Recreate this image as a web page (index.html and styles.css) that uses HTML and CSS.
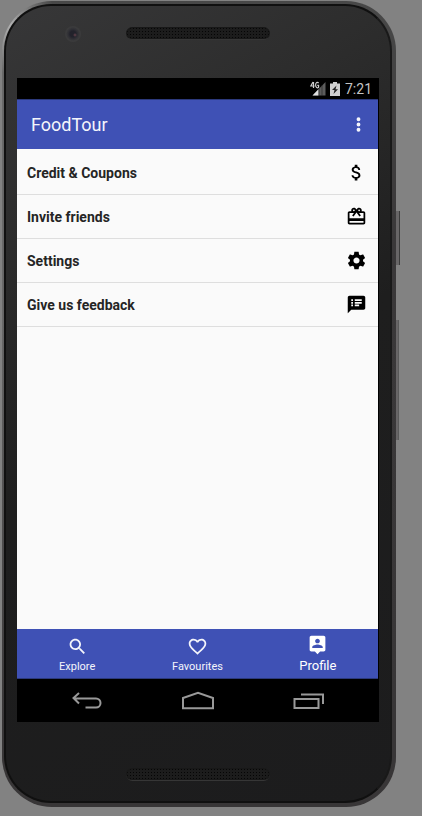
FILE: index.html
```html
<!DOCTYPE html>
<html lang="en">
<head>
<meta charset="utf-8">
<meta name="viewport" content="width=device-width, initial-scale=1">
<title>FoodTour</title>
<link rel="stylesheet" href="styles.css">
</head>
<body>
<div class="phone">
  <span class="side-button power"></span>
  <span class="side-button volume"></span>
  <div class="body">
    <div class="bezel bezel-top">
      <span class="camera"></span>
      <span class="grille"></span>
    </div>
    <div class="screen">
      <div class="status">
        <svg class="status-signal" viewBox="0 0 16 16" role="img" aria-label="4G signal">
          <path d="M3 1 0.8 5H4.6M3.5 1v6" fill="none" stroke="#d0d0d0" stroke-width="1.2"/>
          <path d="M8.6 2.2C7.500 .6 5.600 1.400 5.600 4s1.900 3.400 3 2.300V4.300H7.300" fill="none" stroke="#d0d0d0" stroke-width="1.2"/>
          <path d="M2.500 14.500 15.500 1v13.500z" fill="#5c5c5c"/>
          <path d="M2.500 14.500 8.500 8.300v6.200z" fill="#e0e0e0"/>
          <path d="M9 8v7M12 4v11" stroke="#222" stroke-width=".6"/>
        </svg>
        <svg class="status-battery" viewBox="0 0 10 16" role="img" aria-label="Battery charging">
          <path d="M3 1h4v1.500h3V15H0V2.500h3z" fill="#d0d0d0"/>
          <path d="M6.500 4.500 2 9h2.500L3.500 13 8 8.200H5.500z" fill="#222"/>
        </svg>
        <span class="clock">7:21</span>
      </div>
      <div class="app">
        <header class="appbar">
          <h1>FoodTour</h1>
          <button class="more" aria-label="More options">
            <svg class="icon" viewBox="0 0 24 24"><path d="M12 8.200a2.200 2.200 0 1 0 0-4.400 2.200 2.200 0 0 0 0 4.400zm0 1.600a2.200 2.200 0 1 0 0 4.400 2.200 2.200 0 0 0 0-4.400zm0 6a2.200 2.200 0 1 0 0 4.400 2.200 2.200 0 0 0 0-4.400z"/></svg>
          </button>
        </header>
        <main class="list">
          <button class="row"><span>Credit &amp; Coupons</span>
            <svg class="icon" viewBox="0 0 24 24"><path d="M11.800 10.900c-2.270-.59-3-1.200-3-2.150 0-1.090 1.010-1.850 2.700-1.850 1.780 0 2.440.85 2.500 2.100h2.210c-.07-1.720-1.120-3.300-3.210-3.810V3h-3v2.160c-1.940.42-3.500 1.680-3.500 3.610 0 2.310 1.910 3.460 4.700 4.130 2.500.6 3 1.480 3 2.410 0 .69-.49 1.790-2.700 1.790-2.060 0-2.870-.92-2.980-2.100h-2.200c.12 2.190 1.760 3.420 3.680 3.830V21h3v-2.150c1.950-.37 3.500-1.500 3.500-3.550 0-2.840-2.430-3.810-4.700-4.400z"/></svg></button>
          <button class="row"><span>Invite friends</span>
            <svg class="icon" viewBox="0 0 24 24"><path d="M20 6h-2.180c.11-.31.18-.65.18-1 0-1.660-1.340-3-3-3-1.050 0-1.960.54-2.500 1.350l-.5.670-.5-.68C10.960 2.540 10.050 2 9 2 7.340 2 6 3.340 6 5c0 .35.070.69.180 1H4c-1.110 0-1.990.89-1.990 2L2 19c0 1.110.89 2 2 2h16c1.110 0 2-.89 2-2V8c0-1.110-.89-2-2-2zm-5-2c.55 0 1 .45 1 1s-.45 1-1 1-1-.45-1-1 .45-1 1-1zM9 4c.55 0 1 .45 1 1s-.45 1-1 1-1-.45-1-1 .45-1 1-1zm11 15H4v-2h16v2zm0-5H4V8h5.080L7 10.830 8.620 12 11 8.760l1-1.360 1 1.360L15.380 12 17 10.830 14.920 8H20v6z"/></svg></button>
          <button class="row"><span>Settings</span>
            <svg class="icon" viewBox="0 0 24 24"><path d="M19.430 12.980c.04-.32.070-.64.070-.98s-.03-.66-.07-.98l2.110-1.650c.19-.15.240-.42.120-.64l-2-3.460c-.12-.22-.39-.3-.61-.22l-2.490 1c-.52-.4-1.080-.73-1.690-.98l-.38-2.650C14.460 2.180 14.250 2 14 2h-4c-.25 0-.46.180-.49.420l-.38 2.650c-.61.250-1.170.59-1.690.98l-2.490-1c-.23-.09-.49 0-.61.220l-2 3.460c-.13.220-.07.490.120.640l2.110 1.650c-.04.320-.07.650-.07.980s.03.660.070.980l-2.110 1.650c-.19.150-.24.420-.12.640l2 3.460c.12.220.39.300.61.220l2.490-1c.52.400 1.080.73 1.690.98l.38 2.650c.03.240.24.420.49.420h4c.25 0 .46-.18.49-.42l.38-2.650c.61-.25 1.170-.59 1.690-.98l2.490 1c.23.090.49 0 .61-.22l2-3.460c.12-.22.070-.49-.12-.64l-2.110-1.650zM12 15.500c-1.930 0-3.500-1.570-3.500-3.500s1.570-3.500 3.500-3.500 3.500 1.570 3.500 3.500-1.570 3.500-3.500 3.500z"/></svg></button>
          <button class="row"><span>Give us feedback</span>
            <svg class="icon" viewBox="0 0 24 24"><path d="M20 2H4c-1.100 0-1.990.9-1.990 2L2 22l4-4h14c1.100 0 2-.9 2-2V4c0-1.100-.9-2-2-2zM8 14H6v-2h2v2zm0-3H6V9h2v2zm0-3H6V6h2v2zm7 6h-5v-2h5v2zm3-3h-8V9h8v2zm0-3h-8V6h8v2z"/></svg></button>
        </main>
        <nav class="tabs">
          <a class="tab" href="#explore">
            <svg class="icon" viewBox="0 0 24 24"><path d="M15.500 14h-.79l-.28-.27C15.410 12.590 16 11.110 16 9.500 16 5.910 13.090 3 9.500 3S3 5.910 3 9.500 5.910 16 9.500 16c1.610 0 3.090-.59 4.230-1.570l.27.280v.79l5 4.990L20.490 19l-4.990-5zm-6 0C7.010 14 5 11.990 5 9.500S7.010 5 9.500 5 14 7.010 14 9.500 11.990 14 9.500 14z"/></svg>
            <span>Explore</span></a>
          <a class="tab" href="#favourites">
            <svg class="icon" viewBox="0 0 24 24"><path d="M16.500 3c-1.740 0-3.410.81-4.500 2.090C10.910 3.810 9.240 3 7.500 3 4.420 3 2 5.420 2 8.500c0 3.780 3.400 6.860 8.550 11.540L12 21.350l1.450-1.320C18.600 15.360 22 12.280 22 8.500 22 5.420 19.580 3 16.500 3zm-4.400 15.550l-.1.100-.1-.1C7.140 14.240 4 11.390 4 8.500 4 6.500 5.500 5 7.500 5c1.540 0 3.040.99 3.570 2.360h1.870C13.460 5.990 14.960 5 16.500 5c2 0 3.500 1.500 3.500 3.500 0 2.890-3.140 5.740-7.900 10.050z"/></svg>
            <span>Favourites</span></a>
          <a class="tab active" href="#profile" aria-current="page">
            <svg class="icon" viewBox="0 0 24 24"><path d="M19 2H5c-1.110 0-2 .9-2 2v14c0 1.100.89 2 2 2h4l3 3 3-3h4c1.100 0 2-.9 2-2V4c0-1.100-.9-2-2-2zm-7 3.300c1.490 0 2.700 1.210 2.700 2.700s-1.210 2.700-2.700 2.700S9.300 9.490 9.300 8s1.210-2.700 2.700-2.700zM18 16H6v-.9c0-2 4-3.100 6-3.100s6 1.100 6 3.100v.9z"/></svg>
            <span>Profile</span></a>
        </nav>
      </div>
      <div class="system-nav">
        <button aria-label="Back"><svg viewBox="0 0 32 20"><path d="M8 2 2.500 7 8 12.500M2.500 7.500H25a4.500 4.500 0 0 1 0 9H14.500"/></svg></button>
        <button aria-label="Home"><svg viewBox="0 0 32 20"><path d="M1 17.300V7L16 1.800 31 7v10.300z"/></svg></button>
        <button aria-label="Recent apps"><svg viewBox="0 0 32 20"><path d="M1.500 8h24v9h-24zM8 3.500h22V13"/></svg></button>
      </div>
    </div>
    <div class="bezel bezel-bottom"><span class="grille"></span></div>
  </div>
</div>
</body>
</html>
```
FILE: styles.css
```css
* { box-sizing: border-box; }

body {
  margin: 0;
  min-height: 100vh;
  display: flex;
  padding: 1px 26px 9px 2px;
  background: #828282;
  font-family: Roboto, "Liberation Sans", sans-serif;
}

button {
  margin: 0;
  padding: 0;
  border: 0;
  background: none;
  font: inherit;
  color: inherit;
}

svg { display: block; }

.icon {
  width: 21px;
  height: 21px;
  fill: currentColor;
}

/* Device */
.phone {
  position: relative;
  flex: 1;
  display: flex;
  padding: 3px 4px 4px 2px;
  border-radius: 50px;
  background:
    radial-gradient(circle at 8px 24px, #b0b0b0 0, rgba(120, 120, 120, 0) 48px),
    linear-gradient(rgba(56, 54, 55, 0) 40%, #383637 90%),
    linear-gradient(90deg, #6c6c6c 0, rgba(80, 80, 80, 0) 12px),
    linear-gradient(#484848, #3a3839 30%, #383637);
}

.body {
  flex: 1;
  display: flex;
  flex-direction: column;
  padding: 0 11px;
  border: 2px solid #101010;
  border-right-color: #191919;
  border-radius: 47px;
  background: linear-gradient(150deg, #373738 0, #2d2d2d 22%, #1e1e1e 50%, #1c1c1d 100%);
}

.side-button {
  position: absolute;
  border-right: 1px solid #3c3c3c;
  background: #686667;
}

.power {
  top: 210px;
  right: -4px;
  width: 4px;
  height: 54px;
}

.volume {
  top: 319px;
  right: -3px;
  width: 3px;
  height: 120px;
  border-color: #5a5a5a;
}

.bezel {
  position: relative;
  display: flex;
  justify-content: center;
}

.bezel-top {
  height: 72px;
  padding-top: 21px;
}

.bezel-bottom {
  height: 79px;
  padding-top: 46px;
}

.grille {
  width: 144px;
  height: 13px;
  border-radius: 7px;
  border-bottom: 1px solid #363636;
  background: radial-gradient(circle, #050505 1px, #1c1c1c 1px) 0 0 / 3px 3px;
  box-shadow: inset 0 0 1px 1px #191919;
}

.camera {
  position: absolute;
  top: 20px;
  left: 48px;
  width: 16px;
  height: 16px;
  border-radius: 50%;
  background:
    radial-gradient(circle at 10px 9px, #68434d 0, rgba(80, 50, 60, 0) 2px),
    radial-gradient(circle, #22222b 3px, #303035 5px, #3b3b3c 7px);
}

.screen {
  flex: 1;
  display: flex;
  flex-direction: column;
  background: #000;
}

.status {
  height: 21px;
  display: flex;
  align-items: center;
  justify-content: flex-end;
  padding-right: 7px;
  color: #c4c4c4;
}

.status-signal {
  width: 16px;
  height: 16px;
  margin-right: 4px;
}

.status-battery {
  width: 10px;
  height: 16px;
  margin-right: 5px;
}

.clock {
  font-size: 14px;
  line-height: 20px;
}

/* Application */
.app {
  flex: 1;
  display: flex;
  flex-direction: column;
  margin-right: 1px;
  background: #fafafa;
}

.appbar {
  height: 50px;
  display: flex;
  align-items: center;
  justify-content: space-between;
  padding: 0 9px 0 14px;
  border-top: 1px solid #2c397c;
  background: #3f51b5;
  color: #f4f5fb;
}

.appbar h1 {
  margin: 0;
  font-size: 18px;
  font-weight: 400;
  line-height: 24px;
}

.list {
  flex: 1;
  padding-top: 2px;
}

.row {
  width: 100%;
  height: 44px;
  display: flex;
  align-items: center;
  justify-content: space-between;
  padding: 0 11px 0 10px;
  border-bottom: 1px solid #dedede;
  color: #252525;
  font-size: 14px;
  font-weight: 700;
  line-height: 20px;
}

.row .icon { color: #000; }

.tabs {
  height: 50px;
  display: flex;
  border-bottom: 1px solid #2c397c;
  background: #3f51b5;
}

.tab {
  flex: 1;
  display: flex;
  flex-direction: column;
  align-items: center;
  gap: 2px;
  padding-top: 7px;
  color: #f4f5fb;
  font-size: 11px;
  line-height: 16px;
  text-decoration: none;
}

.tab.active {
  padding-top: 5px;
  font-size: 13px;
  line-height: 18px;
  color: #fff;
}

.system-nav {
  height: 43px;
  display: flex;
  align-items: center;
  padding: 0 15px;
}

.system-nav button {
  flex: 1;
  display: flex;
  justify-content: center;
}

.system-nav svg {
  width: 32px;
  height: 20px;
  fill: none;
  stroke: #999;
  stroke-width: 2;
}
```
